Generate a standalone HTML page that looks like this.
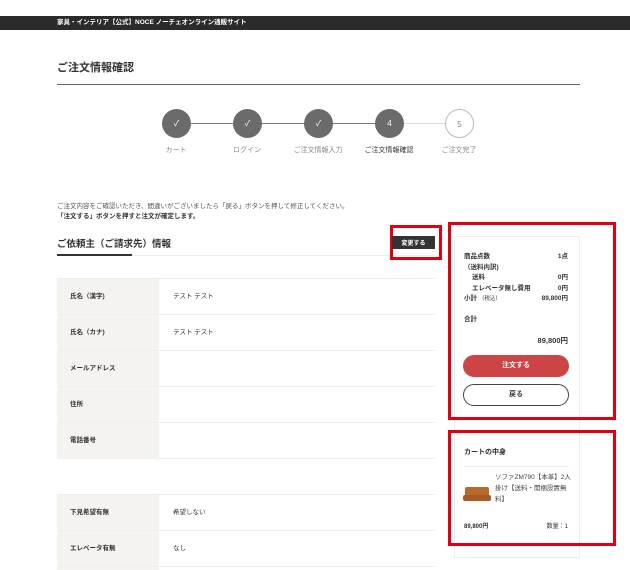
<!DOCTYPE html>
<html style="width:630px;height:570px;overflow:hidden"><head><meta charset="utf-8"><style>
*{margin:0;padding:0;box-sizing:border-box}
body{width:630px;height:570px;background:#fff;position:relative;overflow:hidden;font-family:"Liberation Sans","Noto Sans CJK JP",sans-serif;color:#333}
.a{position:absolute}
.bar{left:0;top:16px;width:630px;height:14px;background:#2b2b2b;color:#fff;font-size:6.5px;font-weight:bold;line-height:14px;padding-left:57px}
.c{width:29px;height:29px;border-radius:50%;background:#6b6b6b;color:#fff;font-size:8px;text-align:center;line-height:29px;top:109px}
.lb{top:145px;font-size:7px;color:#888;width:80px;text-align:center}
.row{left:57px;width:378px;height:36px;border-top:1px solid #eee;font-size:6.5px;font-weight:bold}
.row .k{position:absolute;left:0;top:0;width:102px;height:36px;background:#f4f3f0;padding-left:13px;line-height:36px}
.row .v{position:absolute;left:116px;top:0;line-height:36px;font-weight:normal}
.red{border:3px solid #e10012}
.s{font-size:6.5px;font-weight:bold;left:464px;width:104px}
.s span{float:right}
</style></head><body>
<div class="a bar">家具・インテリア【公式】NOCE ノーチェオンライン通販サイト</div>
<div class="a" style="left:57px;top:59px;font-size:11px;font-weight:bold">ご注文情報確認</div>
<div class="a" style="left:57px;top:84px;width:523px;height:1px;background:#666"></div>
<div class="a" style="left:190px;top:123px;width:210px;height:1px;background:#777"></div>
<div class="a" style="left:400px;top:123px;width:50px;height:1px;background:#ddd"></div>
<div class="a c" style="left:162px">✓</div>
<div class="a c" style="left:233px">✓</div>
<div class="a c" style="left:304px">✓</div>
<div class="a c" style="left:375px">4</div>
<div class="a c" style="left:445px;background:#fff;border:1px solid #bbb;color:#888">5</div>
<div class="a lb" style="left:136px">カート</div>
<div class="a lb" style="left:207px">ログイン</div>
<div class="a lb" style="left:278px">ご注文情報入力</div>
<div class="a lb" style="left:349px;color:#333">ご注文情報確認</div>
<div class="a lb" style="left:419px">ご注文完了</div>
<div class="a" style="left:57px;top:200px;font-size:6.5px;color:#555">ご注文内容をご確認いただき、間違いがございましたら「戻る」ボタンを押して修正してください。</div>
<div class="a" style="left:57px;top:210px;font-size:6.5px;font-weight:bold">「注文する」ボタンを押すと注文が確定します。</div>
<div class="a" style="left:57px;top:236px;font-size:9.5px;font-weight:bold">ご依頼主（ご請求先）情報</div>
<div class="a" style="left:57px;top:255px;width:378px;height:1px;background:#eee"></div>
<div class="a" style="left:57px;top:254px;width:75px;height:2px;background:#333"></div>
<div class="a red" style="left:390px;top:225px;width:52px;height:35px"></div>
<div class="a" style="left:392px;top:236px;width:43px;height:13px;background:#333;color:#fff;font-size:6px;font-weight:bold;display:flex;align-items:center;justify-content:center">変更する</div>
<div class="a row" style="top:278px"><div class="k">氏名（漢字)</div><div class="v">テスト テスト</div></div>
<div class="a row" style="top:314px"><div class="k">氏名（カナ)</div><div class="v">テスト テスト</div></div>
<div class="a row" style="top:350px"><div class="k">メールアドレス</div></div>
<div class="a row" style="top:386px"><div class="k">住所</div></div>
<div class="a row" style="top:422px;border-bottom:1px solid #eee;height:37px"><div class="k">電話番号</div></div>
<div class="a row" style="top:494px"><div class="k">下見希望有無</div><div class="v">希望しない</div></div>
<div class="a row" style="top:530px"><div class="k">エレベータ有無</div><div class="v">なし</div></div>
<div class="a row" style="top:566px;height:4px"><div class="k" style="height:4px"></div></div>
<div class="a" style="left:454px;top:236px;width:126px;height:322px;border:1px solid #eee"></div>
<div class="a red" style="left:448px;top:222px;width:168px;height:198px"></div>
<div class="a red" style="left:448px;top:430px;width:168px;height:116px"></div>
<div class="a s" style="top:250px">商品点数<span>1点</span></div>
<div class="a s" style="top:261px">（送料内訳)</div>
<div class="a s" style="top:271px;padding-left:8px">送料<span>0円</span></div>
<div class="a s" style="top:282px;padding-left:8px">エレベータ無し費用<span>0円</span></div>
<div class="a s" style="top:292px">小計 <small style="font-weight:normal;font-size:5.5px">（税込）</small><span>89,800円</span></div>
<div class="a s" style="top:313px">合計</div>
<div class="a s" style="top:335px;font-size:7.5px"><span>89,800円</span></div>
<div class="a" style="left:463px;top:355px;width:106px;height:22px;border-radius:11px;background:#cc4444;color:#fff;font-size:7px;font-weight:bold;text-align:center;line-height:22px">注文する</div>
<div class="a" style="left:463px;top:384px;width:106px;height:22px;border-radius:11px;border:1.5px solid #444;font-size:7px;font-weight:bold;text-align:center;line-height:19px">戻る</div>
<div class="a s" style="top:447px;font-size:7px">カートの中身</div>
<div class="a" style="left:463px;top:466px;width:106px;height:1px;background:#eee"></div>
<div class="a" style="left:495px;top:472px;width:76px;font-size:6.5px;line-height:11px;color:#444">ソファZM790【本革】2人掛け【送料・開梱設置無料】</div>
<div class="a" style="left:465px;top:487px;width:24px;height:9px;background:#b86a2c;border-radius:2px"></div>
<div class="a" style="left:463px;top:495px;width:28px;height:6px;background:#a85a20;border-radius:2px"></div>
<div class="a s" style="top:521px;font-size:6px">89,800円<span style="font-weight:normal">数量：1</span></div>
</body></html>
